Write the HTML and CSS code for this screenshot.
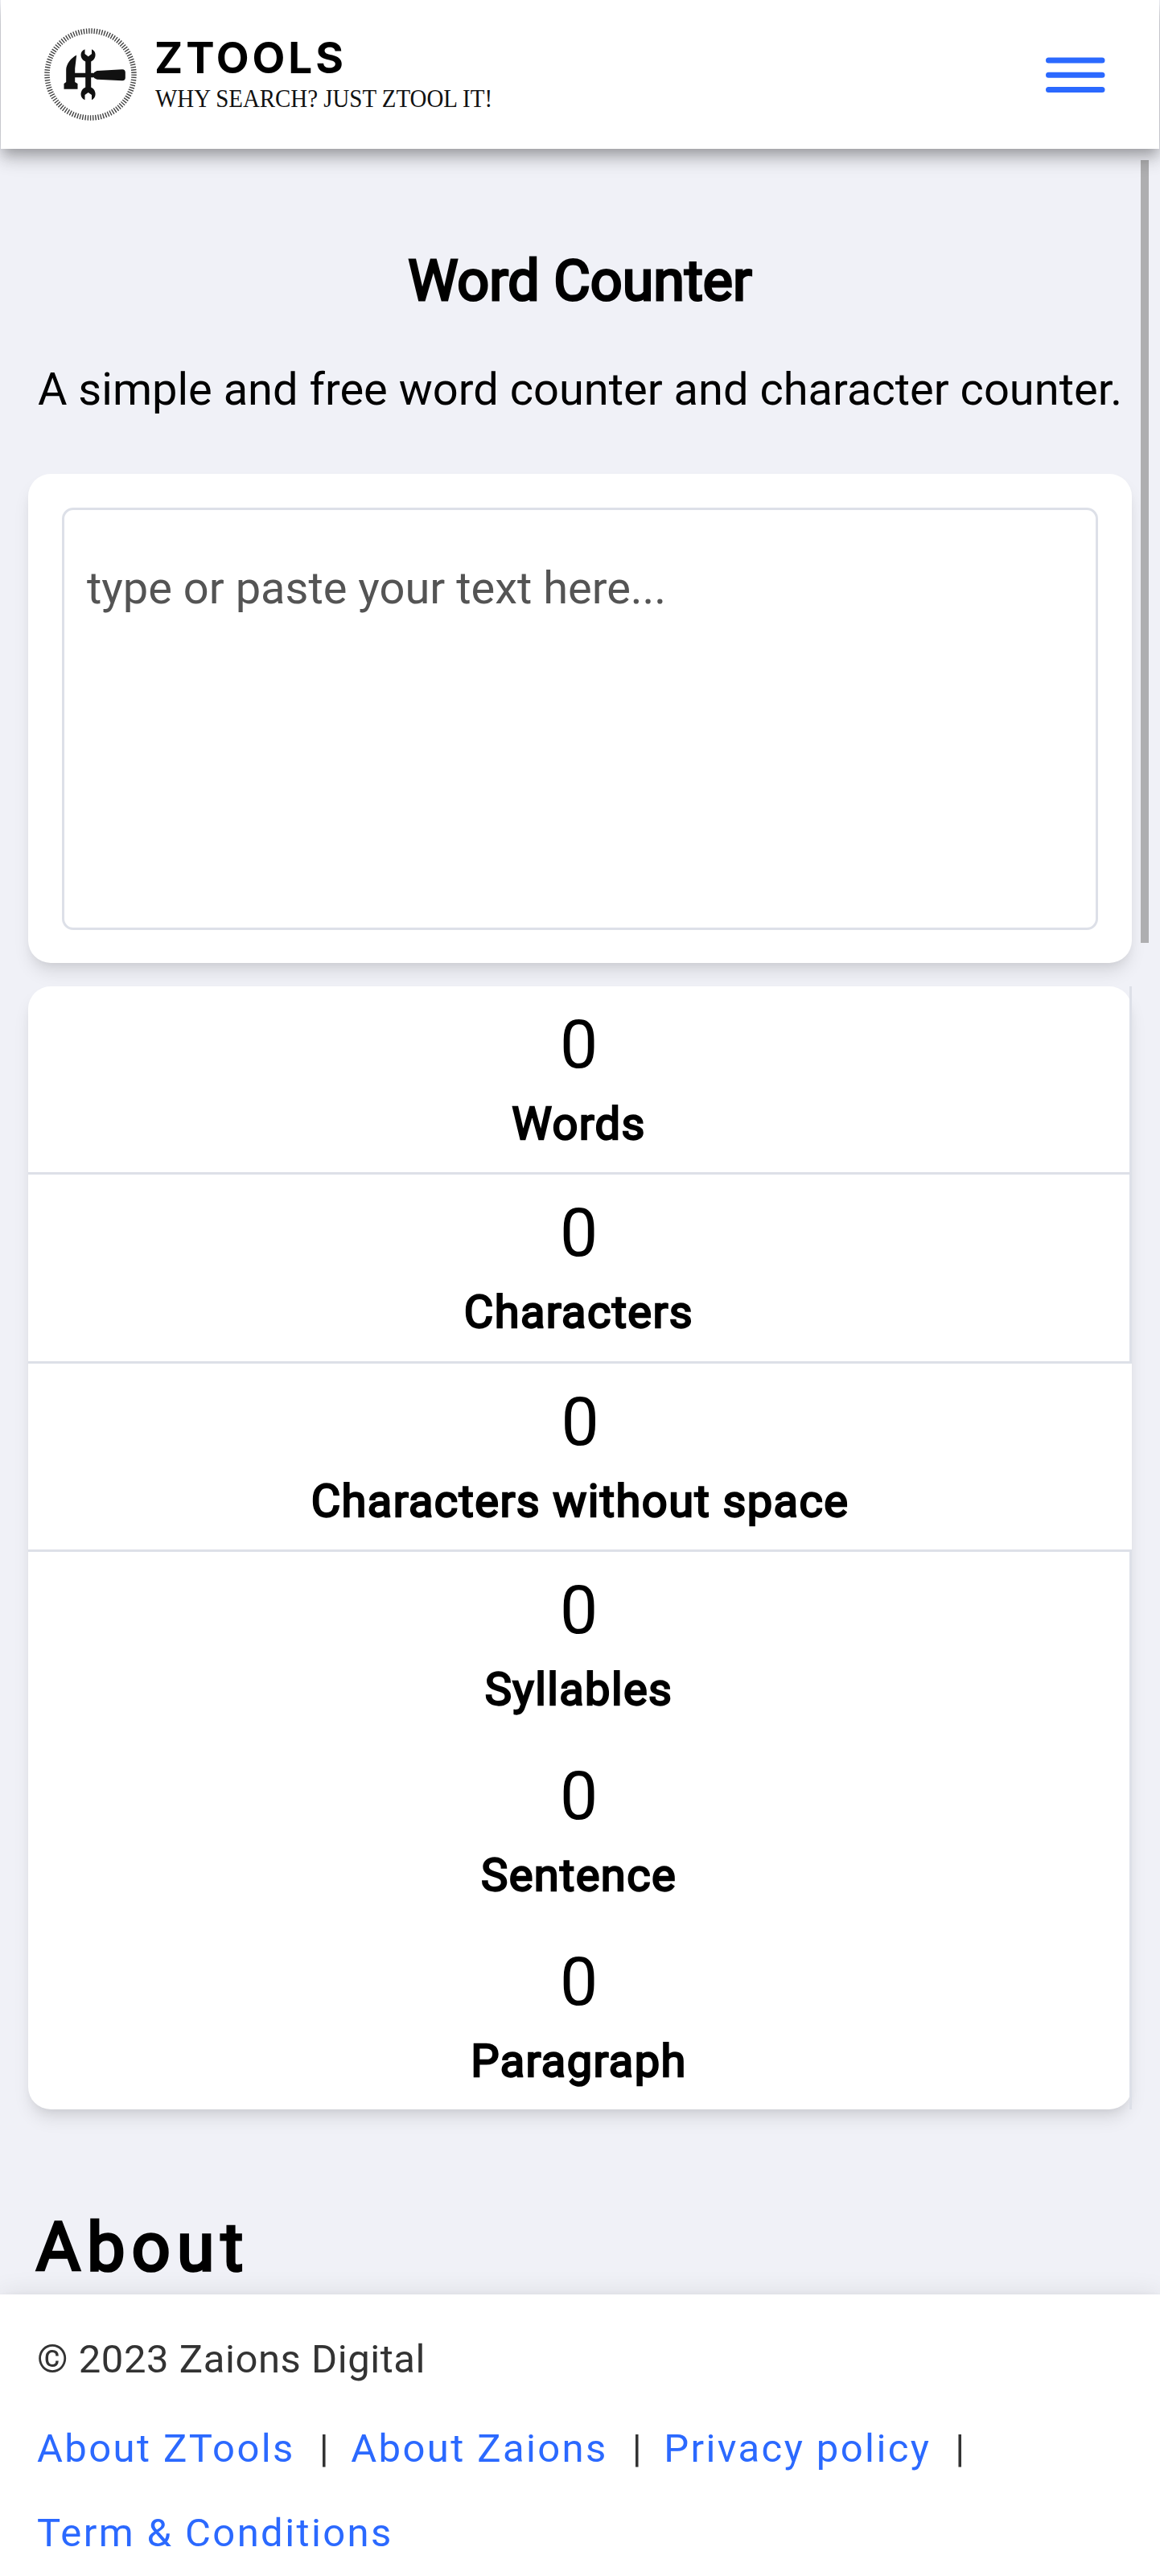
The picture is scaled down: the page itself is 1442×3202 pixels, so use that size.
FILE: index.html
```html
<!DOCTYPE html>
<html lang="en">
<head>
<meta charset="utf-8">
<title>Word Counter</title>
<link rel="stylesheet" href="styles.css">
</head>
<body>
<header class="header">
  <a class="brand">
    <svg class="brand-mark" width="115" height="115" viewBox="0 0 115 115">
      <circle cx="57.500" cy="57.500" r="54" fill="none" stroke="#444" stroke-width="6.500" stroke-dasharray="1.400 1.827"/>
      <g fill="#111">
        <path d="M40.200 33.500C33 37 27.200 45 27.200 52V67L24.500 69V75.700H41.500V69L38.200 67V61.300H63V55.700H38.200V50Z"/>
        <path d="M62 55L65.500 53L97 51.200Q100.800 51.200 100.800 55V61.500Q100.800 65.300 97 65.300L65.500 63.800L62 62Z"/>
        <path d="M50.500 26.300C44 28.500 43.500 38 51.200 41.500V73.500C43.500 77 44 87 50.500 89.300V83L54.700 80L59 83V89.300C65 87 65.500 77 58.200 73.500V41.500C65.500 38 65 28.500 59 26.300V32L54.700 35.200L50.500 32Z"/>
      </g>
    </svg>
    <svg class="brand-text" width="440" height="130" viewBox="0 0 440 130">
      <text class="brand-name" x="0" y="62.500" textLength="235" lengthAdjust="spacing">ZTOOLS</text>
      <text class="brand-tag" x="1" y="104.500" textLength="419" lengthAdjust="spacingAndGlyphs">WHY SEARCH? JUST ZTOOL IT!</text>
    </svg>
  </a>
  <svg class="menu" width="84" height="84" viewBox="0 0 84 84">
    <path d="M8.500 24H75M8.500 42.200H75M8.500 60.500H75"/>
  </svg>
</header>
<main class="content">
  <h1 class="title">Word Counter</h1>
  <p class="subtitle">A simple and free word counter and character counter.</p>
  <section class="card editor">
    <div class="textarea">type or paste your text here...</div>
  </section>
  <section class="card stats">
    <div class="stat lined"><span class="num">0</span><span class="label">Words</span></div>
    <div class="stat lined"><span class="num">0</span><span class="label">Characters</span></div>
    <div class="stat lined wide"><span class="num">0</span><span class="label">Characters without space</span></div>
    <div class="stat"><span class="num">0</span><span class="label">Syllables</span></div>
    <div class="stat"><span class="num">0</span><span class="label">Sentence</span></div>
    <div class="stat"><span class="num">0</span><span class="label">Paragraph</span></div>
  </section>
  <h2 class="about">About</h2>
  <div class="scrollbar"></div>
</main>
<footer class="footer">
  <p class="copy">© 2023 Zaions Digital</p>
  <nav class="links">
    <a>About ZTools</a><span class="sep">|</span><a>About Zaions</a><span class="sep">|</span><a>Privacy policy</a><span class="sep">|</span><a>Term &amp; Conditions</a>
  </nav>
</footer>
</body>
</html>
```
FILE: styles.css
```css
* { box-sizing: border-box; margin: 0; padding: 0; }
body {
  display: flex;
  flex-direction: column;
  height: 3202px;
  overflow: hidden;
  background: #f0f1f7;
  color: #000;
  font-family: Roboto, sans-serif;
  font-size: 56px;
}
.header, .footer {
  position: relative;
  z-index: 1;
  background: #fff;
  box-shadow: 0 7px 14px -3.5px rgba(0,0,0,.2), 0 14px 17.5px rgba(0,0,0,.14), 0 3.5px 35px rgba(0,0,0,.12);
}
.header {
  flex: none;
  height: 185px;
  margin: 0 1px;
  padding: 0 62.5px 0 53.5px;
  display: flex;
  align-items: center;
  justify-content: space-between;
}
.brand { display: flex; align-items: center; gap: 22.5px; }
.brand-text { overflow: visible; }
.brand-name { font: 700 53px Inter, sans-serif; }
.brand-tag { font: 32px "Liberation Serif", serif; fill: #111; }
.menu { fill: none; stroke: #2b69ff; stroke-width: 7; stroke-linecap: round; }
.content {
  position: relative;
  flex: 1;
  min-height: 0;
  overflow: hidden;
  padding: 0 35px;
}
.title, .label, .about { font-weight: 400; -webkit-text-stroke: .042em #000; }
.title {
  margin-top: 122px;
  font-size: 70px;
  line-height: 84px;
  text-align: center;
}
.subtitle { margin: 53px -20px 0; line-height: 80px; text-align: center; white-space: nowrap; }
.card {
  background: #fff;
  border-radius: 28px;
  box-shadow: 0 14px 21px -3.5px rgba(0,0,0,.1), 0 7px 14px -7px rgba(0,0,0,.1);
}
.editor { margin-top: 64.5px; height: 608.5px; padding: 42px; }
.textarea {
  height: 525px;
  border: 3.5px solid #dde0e8;
  border-radius: 14px;
  padding: 57px 28px;
  line-height: 80px;
  color: #545454;
}
.stats { margin-top: 28.5px; }
.stat {
  height: 231px;
  padding-top: 22px;
  display: flex;
  flex-direction: column;
  align-items: center;
  border-right: 3.5px solid #dde0e8;
}
.stat.lined { height: 234.5px; border-bottom: 3.5px solid #dde0e8; }
.stat.wide { border-right: 0; }
.num { font-size: 84px; line-height: 102px; }
.label { line-height: 80px; margin-top: 7px; letter-spacing: 1.4px; }
.about { margin: 122px 0 0 10px; font-size: 84px; line-height: 100px; letter-spacing: 8.4px; }
.scrollbar { position: absolute; top: 14px; right: 14px; width: 10.5px; height: 973px; background: #aeaeb0; }
.footer { flex: none; height: 350px; padding: 49px 46px; font-size: 49px; color: #333; }
.copy { line-height: 64px; letter-spacing: .55px; }
.links { margin-top: 26px; display: flex; flex-wrap: wrap; line-height: 105px; letter-spacing: 2.4px; }
.links a { color: #2b69ff; }
.sep { margin: 0 25px 0 30px; }
```
